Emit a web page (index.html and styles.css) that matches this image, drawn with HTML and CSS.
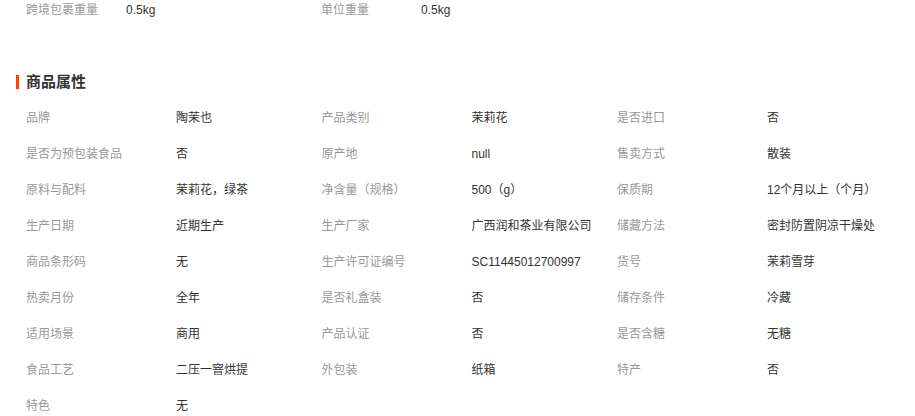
FILE: index.html
```html
<!DOCTYPE html>
<html lang="zh-CN">
<head>
<meta charset="utf-8">
<link rel="stylesheet" href="styles.css">
</head>
<body>
<div class="page">
  <div class="weights">
    <span class="label w-label">跨境包裹重量</span><span class="value w-value">0.5kg</span>
    <span class="label w-label">单位重量</span><span class="value w-value">0.5kg</span>
  </div>
  <h2 class="title">商品属性</h2>
  <div class="attrs">
    <span class="label">品牌</span><span class="value">陶茉也</span>
    <span class="label">产品类别</span><span class="value">茉莉花</span>
    <span class="label">是否进口</span><span class="value">否</span>

    <span class="label">是否为预包装食品</span><span class="value">否</span>
    <span class="label">原产地</span><span class="value">null</span>
    <span class="label">售卖方式</span><span class="value">散装</span>

    <span class="label">原料与配料</span><span class="value">茉莉花，绿茶</span>
    <span class="label">净含量（规格）</span><span class="value">500（g）</span>
    <span class="label">保质期</span><span class="value">12个月以上（个月）</span>

    <span class="label">生产日期</span><span class="value">近期生产</span>
    <span class="label">生产厂家</span><span class="value">广西润和茶业有限公司</span>
    <span class="label">储藏方法</span><span class="value">密封防置阴凉干燥处</span>

    <span class="label">商品条形码</span><span class="value">无</span>
    <span class="label">生产许可证编号</span><span class="value">SC11445012700997</span>
    <span class="label">货号</span><span class="value">茉莉雪芽</span>

    <span class="label">热卖月份</span><span class="value">全年</span>
    <span class="label">是否礼盒装</span><span class="value">否</span>
    <span class="label">储存条件</span><span class="value">冷藏</span>

    <span class="label">适用场景</span><span class="value">商用</span>
    <span class="label">产品认证</span><span class="value">否</span>
    <span class="label">是否含糖</span><span class="value">无糖</span>

    <span class="label">食品工艺</span><span class="value">二压一窨烘提</span>
    <span class="label">外包装</span><span class="value">纸箱</span>
    <span class="label">特产</span><span class="value">否</span>

    <span class="label">特色</span><span class="value">无</span>
  </div>
</div>
</body>
</html>
```

FILE: styles.css
```css
html, body {
  margin: 0;
  padding: 0;
  background: #fff;
}
body {
  font-family: "Liberation Sans", Arial, "Noto Sans CJK SC", sans-serif;
  font-size: 12px;
  color: #333;
}
.page {
  padding: 0 0 0 26px;
}
.weights {
  display: grid;
  grid-template-columns: 100px 195px 100px 195px;
  height: 20px;
  align-items: center;
  line-height: 20px;
}
.label {
  color: #999;
  white-space: nowrap;
}
.value {
  color: #333;
  white-space: nowrap;
}
.title {
  position: relative;
  margin: 52px 0 0 0;
  height: 20px;
  line-height: 20px;
  font-size: 15px;
  font-weight: bold;
  color: #333;
}
.title::before {
  content: "";
  position: absolute;
  left: -10px;
  top: 3px;
  width: 3px;
  height: 14px;
  background: #ff4400;
}
.attrs {
  display: grid;
  grid-template-columns: 150px 145.5px 150px 145.5px 150px 1fr;
  grid-auto-rows: 36px;
  align-items: center;
  margin-top: 8px;
  line-height: 20px;
}
```
